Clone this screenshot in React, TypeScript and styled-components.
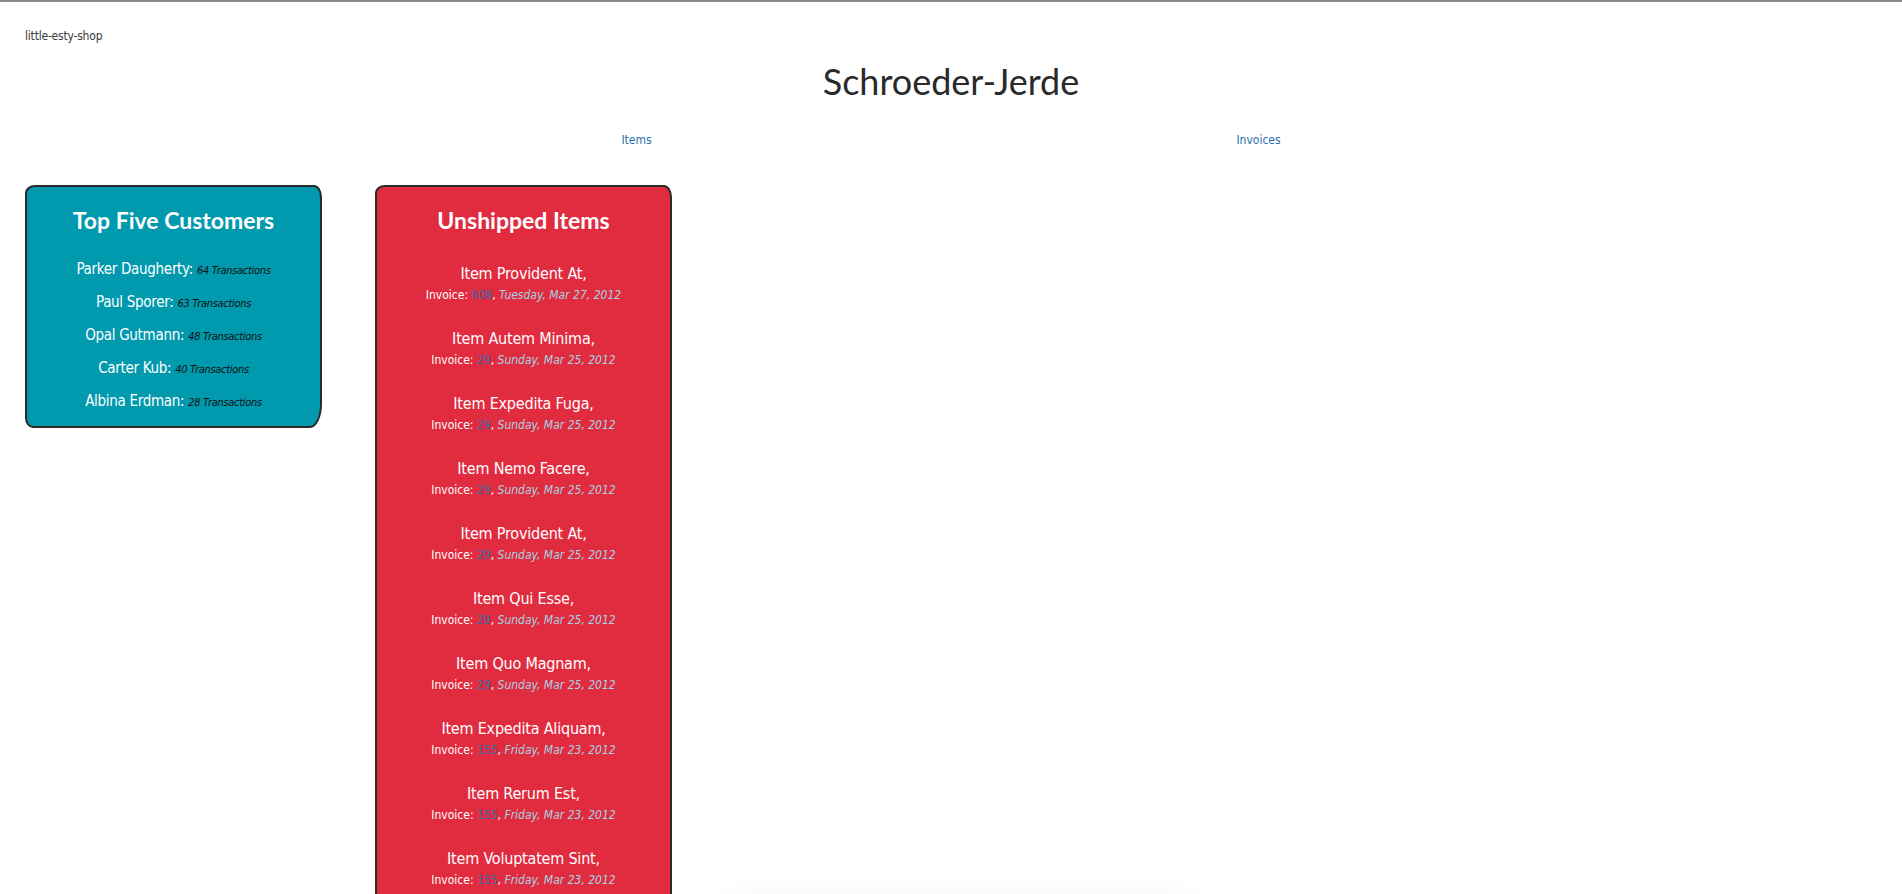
import React from "react";
import styled, { createGlobalStyle } from "styled-components";

const GlobalStyle = createGlobalStyle`
  html, body {
    margin: 0;
    padding: 0;
    background: #ffffff;
  }
  body {
    border-top: 2px solid #8a8a8a;
    font-family: "DejaVu Sans Condensed", "Liberation Sans Narrow", "Liberation Sans", sans-serif;
    font-stretch: condensed;
    color: #333333;
    overflow: hidden;
  }
`;

const Page = styled.div`
  padding: 0 25px;
  min-height: 892px;
`;

const Brand = styled.div`
  padding-top: 26px;
  font-size: 12px;
  line-height: 16px;
  letter-spacing: -0.2px;
  color: #3a3a3a;
`;

const Title = styled.h1`
  margin: 14px 0 0;
  text-align: center;
  font-family: "Lato", "Noto Sans", sans-serif;
  font-stretch: normal;
  font-weight: 400;
  font-size: 36px;
  line-height: 46px;
  color: #2a2a2a;
`;

const Nav = styled.nav`
  width: 1244px;
  margin: 28px auto 0;
  display: flex;
  justify-content: space-around;
`;

const NavLink = styled.a`
  font-size: 12px;
  line-height: 16px;
  color: #2a6fb0;
  text-decoration: none;
`;

const Row = styled.div`
  display: flex;
  align-items: flex-start;
  gap: 53px;
  margin-top: 37px;
`;

const Card = styled.section<{ $bg: string }>`
  width: 297px;
  box-sizing: border-box;
  background: ${(p) => p.$bg};
  border: 2px solid #2b2b2b;
  border-radius: 10px 8px 12px 8px / 8px 12px 24px 10px;
  padding: 18px 10px 8px;
  text-align: center;
  color: #ffffff;
`;

const CardTitle = styled.h2`
  margin: 0 0 18px;
  font-family: "Lato", "Noto Sans", sans-serif;
  font-stretch: normal;
  font-weight: 700;
  font-size: 23px;
  line-height: 30px;
  color: #ffffff;
`;

const CustomerList = styled.ul`
  list-style: none;
  margin: 0;
  padding: 0;
`;

const CustomerRow = styled.li`
  font-size: 15px;
  line-height: 33px;
  height: 33px;
  letter-spacing: -0.3px;
  color: #ffffff;
`;

const Count = styled.em`
  font-size: 11px;
  line-height: 1;
  color: #111111;
`;

const ItemList = styled.ul`
  list-style: none;
  margin: 0;
  padding: 10px 0 40px;
  display: flex;
  flex-direction: column;
  gap: 23px;
`;

const Item = styled.li`
  display: flex;
  flex-direction: column;
`;

const ItemName = styled.span`
  font-size: 16px;
  line-height: 22px;
  letter-spacing: -0.2px;
  color: #ffffff;
`;

const InvoiceLine = styled.span`
  font-size: 12px;
  line-height: 20px;
  color: #ffffff;
`;

const InvoiceLink = styled.a`
  color: #356aa8;
  text-decoration: none;
`;

const DateText = styled.em`
  color: #a4d3e2;
`;

const Ghost = styled.div`
  width: 470px;
  height: 200px;
  margin-top: 726px;
  background: #ffffff;
  box-shadow: 0 0 40px rgba(0, 0, 0, 0.12);
  border-radius: 30px;
`;

const customers = [
  { name: "Parker Daugherty", count: 64 },
  { name: "Paul Sporer", count: 63 },
  { name: "Opal Gutmann", count: 48 },
  { name: "Carter Kub", count: 40 },
  { name: "Albina Erdman", count: 28 },
];

const items = [
  { name: "Item Provident At", invoice: 608, date: "Tuesday, Mar 27, 2012" },
  { name: "Item Autem Minima", invoice: 29, date: "Sunday, Mar 25, 2012" },
  { name: "Item Expedita Fuga", invoice: 29, date: "Sunday, Mar 25, 2012" },
  { name: "Item Nemo Facere", invoice: 29, date: "Sunday, Mar 25, 2012" },
  { name: "Item Provident At", invoice: 29, date: "Sunday, Mar 25, 2012" },
  { name: "Item Qui Esse", invoice: 29, date: "Sunday, Mar 25, 2012" },
  { name: "Item Quo Magnam", invoice: 29, date: "Sunday, Mar 25, 2012" },
  { name: "Item Expedita Aliquam", invoice: 155, date: "Friday, Mar 23, 2012" },
  { name: "Item Rerum Est", invoice: 155, date: "Friday, Mar 23, 2012" },
  { name: "Item Voluptatem Sint", invoice: 155, date: "Friday, Mar 23, 2012" },
];

export default function App() {
  return (
    <>
      <GlobalStyle />
      <Page>
        <Brand>little-esty-shop</Brand>
        <Title>Schroeder-Jerde</Title>
        <Nav>
          <NavLink href="#">Items</NavLink>
          <NavLink href="#">Invoices</NavLink>
        </Nav>
        <Row>
          <Card $bg="#0099ae">
            <CardTitle>Top Five Customers</CardTitle>
            <CustomerList>
              {customers.map((c) => (
                <CustomerRow key={c.name}>
                  {c.name}: <Count>{c.count} Transactions</Count>
                </CustomerRow>
              ))}
            </CustomerList>
          </Card>
          <Card $bg="#e12b3f">
            <CardTitle>Unshipped Items</CardTitle>
            <ItemList>
              {items.map((it, i) => (
                <Item key={i}>
                  <ItemName>{it.name},</ItemName>
                  <InvoiceLine>
                    Invoice: <InvoiceLink href="#">{it.invoice}</InvoiceLink>,{" "}
                    <DateText>{it.date}</DateText>
                  </InvoiceLine>
                </Item>
              ))}
            </ItemList>
          </Card>
          <Ghost />
        </Row>
      </Page>
    </>
  );
}
